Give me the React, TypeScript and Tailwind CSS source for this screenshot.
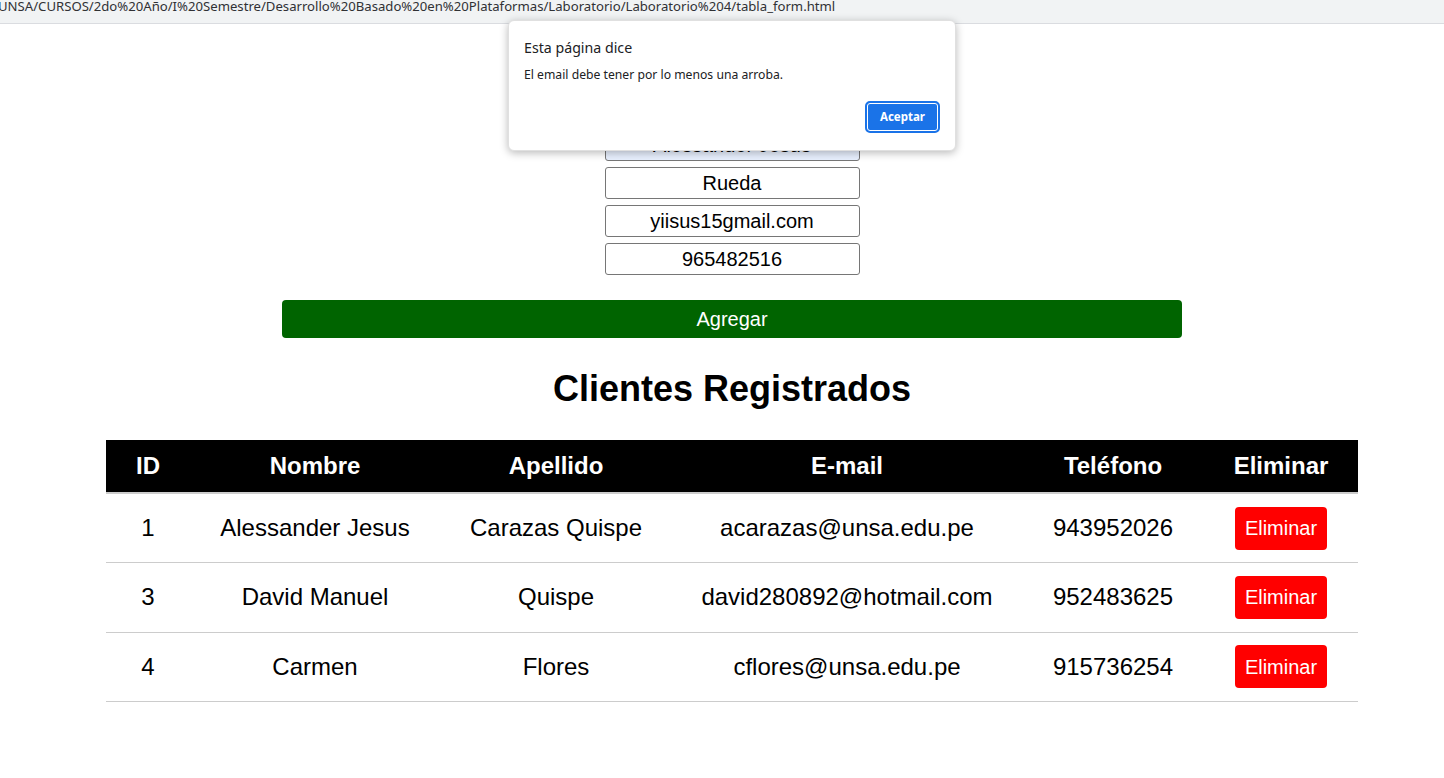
import React from "react";

type Cliente = {
  id: number;
  nombre: string;
  apellido: string;
  email: string;
  telefono: string;
};

const clientes: Cliente[] = [
  { id: 1, nombre: "Alessander Jesus", apellido: "Carazas Quispe", email: "acarazas@unsa.edu.pe", telefono: "943952026" },
  { id: 3, nombre: "David Manuel", apellido: "Quispe", email: "david280892@hotmail.com", telefono: "952483625" },
  { id: 4, nombre: "Carmen", apellido: "Flores", email: "cflores@unsa.edu.pe", telefono: "915736254" },
];

const campos = [
  { value: "Alessander Jesus", autofill: true },
  { value: "Rueda", autofill: false },
  { value: "yiisus15gmail.com", autofill: false },
  { value: "965482516", autofill: false },
];

function AlertDialog() {
  return (
    <div className="absolute left-[508px] top-[20px] w-[448px] h-[131px] bg-white rounded-[6px] border border-[#e0e0e0] shadow-[0_2px_8px_rgba(0,0,0,0.28)] font-['Noto_Sans',sans-serif] text-[#202124]">
      <div className="pl-[15px] pt-[17px]">
        <p className="text-[14.2px] leading-[20px]">Esta página dice</p>
        <p className="mt-[9px] text-[12.2px] leading-[16px]">El email debe tener por lo menos una arroba.</p>
      </div>
      <div className="flex justify-end pr-[15px] mt-[18px]">
        <button className="w-[75px] h-[32px] rounded-[5px] bg-[#1a73e8] border-2 border-[#1a73e8] shadow-[inset_0_0_0_1px_#ffffff] text-white text-[11.5px] font-bold">
          Aceptar
        </button>
      </div>
    </div>
  );
}

export default function App() {
  return (
    <div className="relative w-[1444px] h-[778px] overflow-hidden bg-white font-['Liberation_Sans',Arial,sans-serif] text-black">
      <div className="h-[24px] bg-[#f1f3f4] border-b border-[#dadce0] overflow-hidden">
        <p className="-mt-[4px] -ml-[2px] whitespace-nowrap text-[13.15px] leading-[20px] text-[#303134] font-['Noto_Sans',sans-serif]">
          UNSA/CURSOS/2do%20Año/I%20Semestre/Desarrollo%20Basado%20en%20Plataformas/Laboratorio/Laboratorio%204/tabla_form.html
        </p>
      </div>

      <div className="ml-[106px] w-[1252px] flex flex-col items-center">
        <div className="mt-[105px] flex flex-col gap-[6px] w-[255px]">
          {campos.map((c, i) => (
            <input
              key={i}
              readOnly
              value={c.value}
              className={`h-[32px] w-full rounded-[3px] border border-[#767676] text-center text-[20px] outline-none ${c.autofill ? "bg-[#e8f0fe]" : "bg-white"}`}
            />
          ))}
        </div>

        <button className="mt-[25px] w-[900px] h-[38px] rounded-[4px] bg-[#006400] text-white text-[20px]">
          Agregar
        </button>

        <h1 className="mt-[30px] h-[41px] text-[36px] leading-[41px] font-bold">Clientes Registrados</h1>

        <table className="mt-[31px] w-full border-collapse text-[24px]">
          <thead>
            <tr className="bg-black text-white border-b-2 border-[#cccccc]">
              <th className="w-[84px] h-[53px] font-bold">ID</th>
              <th className="w-[250px] font-bold">Nombre</th>
              <th className="w-[232px] font-bold">Apellido</th>
              <th className="w-[350px] font-bold">E-mail</th>
              <th className="w-[182px] font-bold">Teléfono</th>
              <th className="w-[154px] font-bold">Eliminar</th>
            </tr>
          </thead>
          <tbody>
            {clientes.map((c) => (
              <tr key={c.id} className="border-b border-[#cccccc] text-center">
                <td className="h-[69.5px]">{c.id}</td>
                <td>{c.nombre}</td>
                <td>{c.apellido}</td>
                <td>{c.email}</td>
                <td>{c.telefono}</td>
                <td>
                  <button className="h-[43px] px-[10px] rounded-[4px] bg-[#ff0000] text-white text-[20px]">
                    Eliminar
                  </button>
                </td>
              </tr>
            ))}
          </tbody>
        </table>
      </div>

      <AlertDialog />
    </div>
  );
}
